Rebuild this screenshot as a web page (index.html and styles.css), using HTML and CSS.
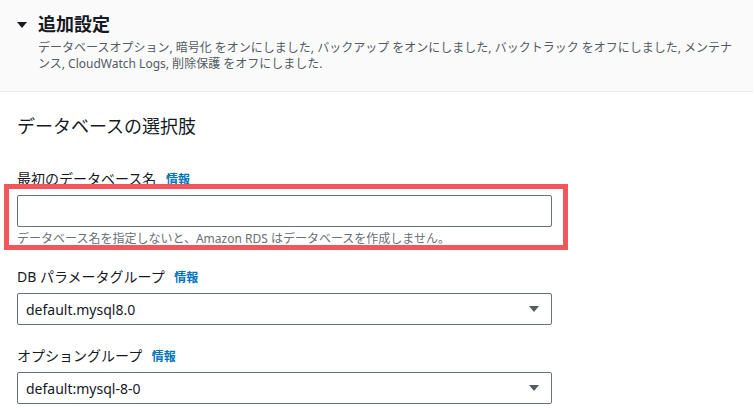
FILE: index.html
```html
<!DOCTYPE html>
<html lang="ja">
<head>
    <meta charset="UTF-8">
    <meta name="viewport" content="width=device-width, initial-scale=1.0">
    <title>追加設定</title>
    <link rel="stylesheet" href="styles.css">
</head>
<body>
    <div class="expand-header">
        <span class="caret"></span>
        <div class="expand-text">
            <h2 class="expand-title">追加設定</h2>
            <p class="expand-desc">データベースオプション, 暗号化 をオンにしました, バックアップ をオンにしました, バックトラック をオフにしました, メンテナンス, CloudWatch Logs, 削除保護 をオフにしました.</p>
        </div>
    </div>

    <div class="section">
        <h3 class="section-title">データベースの選択肢</h3>

        <div class="field highlighted">
            <div class="field-label">最初のデータベース名 <a class="info" href="#">情報</a></div>
            <input class="text-input" type="text">
            <div class="field-hint">データベース名を指定しないと、Amazon RDS はデータベースを作成しません。</div>
            <span class="highlight-box"></span>
        </div>

        <div class="field">
            <div class="field-label">DB パラメータグループ <a class="info" href="#">情報</a></div>
            <div class="select">
                <span>default.mysql8.0</span>
                <span class="select-arrow"></span>
            </div>
        </div>

        <div class="field">
            <div class="field-label">オプショングループ <a class="info" href="#">情報</a></div>
            <div class="select">
                <span>default:mysql-8-0</span>
                <span class="select-arrow"></span>
            </div>
        </div>
    </div>
</body>
</html>
```

FILE: styles.css
```css
body {
    font-family: "Noto Sans", "Noto Sans CJK JP", sans-serif;
    margin: 0;
    background-color: #fff;
    color: #16191f;
}

.expand-header {
    background-color: #fafafa;
    border-bottom: 1px solid #eaeded;
    display: flex;
    align-items: flex-start;
    padding: 12px 10px 20px 17px;
    height: 59px;
}

.caret {
    width: 0;
    height: 0;
    border-left: 5px solid transparent;
    border-right: 5px solid transparent;
    border-top: 6px solid #16191f;
    margin: 10px 11px 0 0;
}

.expand-title {
    margin: 0;
    font-size: 18px;
    line-height: 24px;
    font-weight: 700;
}

.expand-desc {
    margin: 4px 0 0;
    font-size: 12px;
    line-height: 16px;
    color: #545b64;
}

.section {
    padding: 22px 17px 0;
}

.section-title {
    margin: 0 0 31px;
    font-size: 18px;
    line-height: 24px;
    font-weight: 400;
}

.field {
    width: 535px;
    margin-bottom: 21px;
}

.highlighted {
    position: relative;
    margin-bottom: 20px;
}

.field-label {
    font-size: 14px;
    line-height: 20px;
    margin-bottom: 5px;
}

.info {
    color: #0073bb;
    font-size: 12px;
    font-weight: 700;
    text-decoration: none;
    margin-left: 6px;
}

.text-input,
.select {
    box-sizing: border-box;
    width: 535px;
    height: 32px;
    border: 1px solid #687078;
    border-radius: 2px;
    background-color: #fff;
    font-family: inherit;
    font-size: 14px;
    display: block;
    margin: 0;
}

.select {
    display: flex;
    align-items: center;
    justify-content: space-between;
    padding: 0 12px 0 8px;
}

.select-arrow {
    width: 0;
    height: 0;
    border-left: 5px solid transparent;
    border-right: 5px solid transparent;
    border-top: 6px solid #545b64;
}

.field-hint {
    font-size: 12px;
    line-height: 16px;
    color: #687078;
    margin-top: 4px;
}

.highlight-box {
    position: absolute;
    left: -13px;
    top: 15px;
    width: 554px;
    height: 56px;
    border: 5px solid #f0565c;
}
```
